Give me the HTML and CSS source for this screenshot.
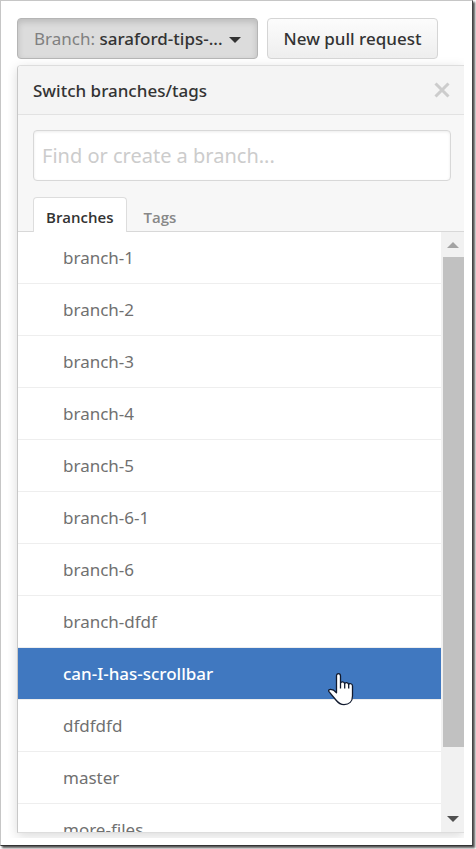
FILE: index.html
```html
<!DOCTYPE html>
<html lang="en">
  <head>
    <meta charset="utf-8">
    <title>Switch branches/tags</title>
    <link rel="stylesheet" href="styles.css">
  </head>
  <body>
    <div class="frame">
      <div class="content">

        <div class="toolbar">
          <button type="button" class="btn selected"><span class="muted">Branch:</span> saraford-tips-...<span class="caret"></span></button>
          <button type="button" class="btn">New pull request</button>
        </div>

        <div class="menu">
          <div class="menu-header">
            <h1 class="menu-title">Switch branches/tags</h1>
            <button type="button" class="close" aria-label="Close">
              <svg width="16" height="16" viewBox="0 0 16 16"><path d="M1.5 1.5L14.5 14.5M14.5 1.5L1.5 14.5" stroke="#ccc" stroke-width="3" fill="none"/></svg>
            </button>
          </div>

          <div class="filters">
            <input type="text" class="filter" aria-label="Find or create a branch" placeholder="Find or create a branch...">
            <div class="tabs">
              <button type="button" class="tab active">Branches</button>
              <button type="button" class="tab">Tags</button>
            </div>
          </div>

          <div class="list">
            <ul class="items">
              <li><a class="item" href="#">branch-1</a></li>
              <li><a class="item" href="#">branch-2</a></li>
              <li><a class="item" href="#">branch-3</a></li>
              <li><a class="item" href="#">branch-4</a></li>
              <li><a class="item" href="#">branch-5</a></li>
              <li><a class="item" href="#">branch-6-1</a></li>
              <li><a class="item" href="#">branch-6</a></li>
              <li><a class="item" href="#">branch-dfdf</a></li>
              <li class="current">
                <a class="item" href="#">can-I-has-scrollbar</a>
                <svg class="pointer" width="26" height="33" viewBox="0 0 26 33"><path d="M8.5 19V3C8.5 1.500 9.300.7 10.500.7S12.500 1.500 12.500 3V10.500C12.800 8.300 16.300 8.300 16.700 10.800C17.200 9 20.200 9.300 20.700 11.500C21.400 10 24.500 10.500 24.500 13V23C24.500 28.500 21 31.700 16 31.700C11.500 31.700 9.500 29 7.500 26.500L1 18.700C.2 17.600.8 16.500 2 16.500C4 16.300 6.500 17.500 8.500 19.700ZM12.500 10V15.500M16.700 10.500V15.500M20.700 11.500V15.500" fill="#fff" stroke="#111a2e" stroke-width="1.300" stroke-linejoin="round"/></svg>
              </li>
              <li><a class="item" href="#">dfdfdfd</a></li>
              <li><a class="item" href="#">master</a></li>
              <li><a class="item" href="#">more-files</a></li>
            </ul>
            <div class="scrollbar">
              <span class="arrow up"></span>
              <div class="track"><div class="thumb"></div></div>
              <span class="arrow down"></span>
            </div>
          </div>
        </div>

      </div>
    </div>
  </body>
</html>
```
FILE: styles.css
```css
* {
  box-sizing: border-box;
}
body, h1, ul, button, input {
  margin: 0;
  padding: 0;
}
body {
  background: #fff;
  font-family: "Noto Sans", "Open Sans", sans-serif;
  font-size: 17px;
  color: #333;
  overflow: hidden;
}
button, input {
  font-family: inherit;
}
button {
  cursor: pointer;
}

/* page edge with its drop shadow */
.frame {
  margin: 0 3px 3px 0;
  padding: 0 8px 7px 7px;
  background: #fff;
  border: 1px solid #c6c6c6;
  border-right-color: #444;
  border-bottom-color: #333;
  box-shadow: 2px 2px 2px #555;
}
.content {
  padding: 17px 0 5px 9px;
  overflow: hidden;
}

.toolbar {
  display: flex;
  gap: 9px;
  margin-bottom: 6px;
}
.btn {
  height: 41px;
  padding: 0 16px;
  border: 1px solid #d5d5d5;
  border-radius: 4px;
  background: linear-gradient(#fcfcfc, #eee);
  color: #333;
  font-size: 17px;
  font-weight: 500;
  white-space: nowrap;
}
.btn.selected {
  border-color: #b5b5b5;
  background: #dcdcdc;
  box-shadow: inset 0 3px 6px rgba(0, 0, 0, 0.15);
}
.muted {
  color: #808080;
  font-weight: 400;
}
.caret {
  display: inline-block;
  margin-left: 6px;
  border: 6px solid transparent;
  border-top-color: #333;
  border-bottom-width: 0;
  vertical-align: middle;
}

.menu {
  background: #fff;
  border: 1px solid #ddd;
  border-left-color: #c8c8c8;
  border-right: 0;
  border-radius: 4px 0 0 0;
  box-shadow: 0 3px 12px rgba(0, 0, 0, 0.15);
}
.menu-header {
  display: flex;
  justify-content: space-between;
  align-items: center;
  height: 49px;
  padding: 0 14px 0 15px;
  background: #f4f4f4;
  border-bottom: 1px solid #e2e2e2;
  border-radius: 4px 0 0 0;
}
.menu-title {
  font-size: 17px;
  font-weight: 500;
}
.close {
  display: flex;
  border: 0;
  background: none;
}

.filters {
  padding: 15px 13px 0 15px;
  background: #f7f7f7;
  border-bottom: 1px solid #d8d8d8;
}
.filter {
  display: block;
  width: 100%;
  height: 51px;
  padding: 0 8px;
  border: 1px solid #d8d8d8;
  border-radius: 4px;
  background: #fff;
  box-shadow: inset 0 1px 3px rgba(0, 0, 0, 0.08);
  font-size: 20px;
}
.filter::placeholder {
  color: #ccc;
}
.tabs {
  display: flex;
  margin-top: 16px;
  margin-bottom: -1px;
}
.tab {
  height: 35px;
  padding: 4px 12px 0;
  border: 1px solid transparent;
  border-bottom: 0;
  background: none;
  color: #888;
  font-family: "Open Sans", sans-serif;
  font-size: 15px;
  font-weight: 600;
}
.tab + .tab {
  margin-left: 4px;
}
.tab.active {
  background: #fff;
  border-color: #ddd;
  border-radius: 4px 4px 0 0;
  color: #333;
}

.list {
  display: flex;
  height: 600px;
  overflow: hidden;
}
.items {
  flex: 1;
  list-style: none;
}
.item {
  display: block;
  height: 52px;
  padding-left: 45px;
  border-bottom: 1px solid #eee;
  background: #fff;
  color: #707070;
  line-height: 51px;
  text-decoration: none;
}
.current {
  position: relative;
}
.current .item {
  background: #4078c0;
  background-clip: padding-box;
  color: #fff;
  font-weight: 500;
}
.pointer {
  position: absolute;
  top: 25px;
  left: 310px;
}

.scrollbar {
  display: flex;
  flex-direction: column;
  align-items: center;
  width: 23px;
  background: #f1f1f1;
}
.track {
  flex: 1;
  align-self: stretch;
  padding-left: 2px;
}
.thumb {
  height: 89%;
  background: #c1c1c1;
}
.arrow {
  border: 6px solid transparent;
}
.arrow.up {
  margin: 10px 0 9px;
  border-top: 0;
  border-bottom-color: #a3a3a3;
}
.arrow.down {
  margin: 9px 0 10px;
  border-bottom: 0;
  border-top-color: #505050;
}
```
